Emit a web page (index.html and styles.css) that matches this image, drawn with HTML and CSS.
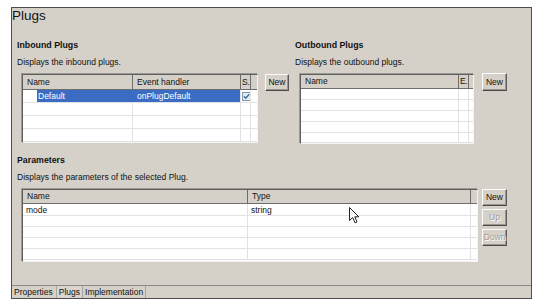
FILE: index.html
```html
<!DOCTYPE html>
<html lang="en">
<head>
<meta charset="utf-8">
<title>Plugs</title>
<link rel="stylesheet" href="styles.css">
</head>
<body>
<div class="frame">
  <div class="title">Plugs</div>
  <div class="body">
    <div class="plugs">
      <section class="sec">
        <div class="sec-title">Inbound Plugs</div>
        <div class="sec-desc">Displays the inbound plugs.</div>
        <div class="tbl-wrap gap-in">
          <div class="tbl tbl-in">
            <div class="tr th"><div class="c">Name</div><div class="c">Event handler</div><div class="c c-narrow">S.</div><div class="c"></div></div>
            <div class="tr sel">
              <div class="c c-sel-name"><span class="hl">Default</span></div>
              <div class="c c-sel">onPlugDefault</div>
              <div class="c c-chk"><span class="chk"><svg width="7" height="7" viewBox="0 0 7 7"><path d="M1 3.2 L2.8 5.2 L6.2 1.2" fill="none" stroke="#4a6a96" stroke-width="1.4"/></svg></span></div>
              <div class="c"></div>
            </div>
            <div class="tr"><div class="c"></div><div class="c"></div><div class="c"></div><div class="c"></div></div>
            <div class="tr"><div class="c"></div><div class="c"></div><div class="c"></div><div class="c"></div></div>
            <div class="tr"><div class="c"></div><div class="c"></div><div class="c"></div><div class="c"></div></div>
          </div>
          <div class="btn btn-in">New</div>
        </div>
      </section>
      <section class="sec">
        <div class="sec-title">Outbound Plugs</div>
        <div class="sec-desc">Displays the outbound plugs.</div>
        <div class="tbl-wrap gap-out">
          <div class="tbl tbl-out">
            <div class="tr th"><div class="c">Name</div><div class="c c-narrow">E.</div><div class="c"></div></div>
            <div class="tr"><div class="c"></div><div class="c"></div><div class="c"></div></div>
            <div class="tr"><div class="c"></div><div class="c"></div><div class="c"></div></div>
            <div class="tr"><div class="c"></div><div class="c"></div><div class="c"></div></div>
            <div class="tr"><div class="c"></div><div class="c"></div><div class="c"></div></div>
            <div class="tr"><div class="c"></div><div class="c"></div><div class="c"></div></div>
          </div>
          <div class="btn btn-out">New</div>
        </div>
      </section>
    </div>
    <section class="sec params">
      <div class="sec-title">Parameters</div>
      <div class="sec-desc">Displays the parameters of the selected Plug.</div>
      <div class="tbl-wrap gap-par">
        <div class="tbl tbl-par">
          <div class="tr th"><div class="c">Name</div><div class="c">Type</div><div class="c"></div></div>
          <div class="tr"><div class="c">mode</div><div class="c">string</div><div class="c"></div></div>
          <div class="tr"><div class="c"></div><div class="c"></div><div class="c"></div></div>
          <div class="tr"><div class="c"></div><div class="c"></div><div class="c"></div></div>
          <div class="tr"><div class="c"></div><div class="c"></div><div class="c"></div></div>
          <div class="tr"><div class="c"></div><div class="c"></div><div class="c"></div></div>
        </div>
        <div class="btn-stack">
          <div class="btn btn-par">New</div>
          <div class="btn btn-par disabled">Up</div>
          <div class="btn btn-par disabled">Down</div>
        </div>
      </div>
    </section>
  </div>
  <div class="tabs">
    <div class="tab tab-first">Properties</div>
    <div class="tab active">Plugs</div>
    <div class="tab">Implementation</div>
  </div>
  <svg class="cursor" width="11" height="17" viewBox="0 0 11 17"><path d="M0.5 0.5 L0.5 13.5 L3.7 10.5 L6 15.8 L8 14.9 L5.8 9.8 L9.8 9.8 Z" fill="#fff" stroke="#222" stroke-width="1" stroke-linejoin="miter"/></svg>
</div>
</body>
</html>
```

FILE: styles.css
```css
* { box-sizing: border-box; }
html, body { margin: 0; padding: 0; background: #fff; }
body {
  font-family: "Liberation Sans", Arial, sans-serif;
  font-size: 8.5px;
  line-height: 11px;
  color: #111;
}
.frame {
  position: relative;
  margin: 7px 0 0 11px;
  width: 521px;
  height: 292px;
  background: #d5d1c9;
  border: 1px solid #4e4e4e;
  display: flex;
  flex-direction: column;
}
.title {
  font-size: 13.5px;
  line-height: 15px;
  height: 15px;
  color: #111;
}
.body {
  flex: 1;
  padding-left: 5px;
}
.plugs {
  display: grid;
  grid-template-columns: 278px auto;
  margin-top: 17px;
}
.sec-title {
  font-weight: bold;
  font-size: 8.8px;
  line-height: 11px;
}
.sec-desc { margin-top: 6px; }
.tbl-wrap {
  display: flex;
  align-items: flex-start;
  margin-top: 6px;
  margin-left: 5px;
}
.gap-in { gap: 7px; }
.gap-out { gap: 8px; }
.gap-par { gap: 4px; }
.params { margin-top: 11px; }

.tbl {
  background: #fff;
  border-top: 1px solid #5e5e5e;
  border-left: 1px solid #5e5e5e;
  border-right: 1px solid #f4f4f4;
  border-bottom: 1px solid #f4f4f4;
  box-shadow: -1px -1px 0 #9c9a94;
}
.tbl-in { width: 236px; }
.tbl-out { width: 174px; }
.tbl-par { width: 456px; padding-bottom: 1px; }

.tr {
  display: grid;
  border-bottom: 1px solid #e2e2e2;
}
.tbl-in .tr { grid-template-columns: 110px 108px 10px 6px; height: 13px; line-height: 12px; }
.tbl-out .tr { grid-template-columns: 158px 10px 4px; height: 11px; line-height: 10px; }
.tbl-out .tr:last-child { height: 10px; }
.tbl-par .tr { grid-template-columns: 225px 223px 6px; height: 11px; line-height: 11px; }
.tbl-par .tr:nth-child(2) { height: 12px; line-height: 12px; }

.c {
  border-right: 1px solid #e2e2e2;
  padding-left: 3px;
  white-space: nowrap;
  overflow: hidden;
}
.c:last-child { border-right: none; }

.tr.th {
  background: #d5d1c9;
  border-bottom: 1px solid #6e6e6e;
}
.tbl-in .tr.th { height: 15px; line-height: 14px; }
.tbl-out .tr.th { height: 14px; line-height: 13px; }
.tbl-par .tr.th { height: 14px; line-height: 13px; }
.th .c {
  border-right: 1px solid #6e6e6e;
  padding-left: 4px;
}
.th .c:last-child { border-right: none; }
.th .c.c-narrow {
  padding-left: 1px;
  overflow: visible;
  letter-spacing: -0.3px;
}

.sel .c-sel-name {
  padding-left: 14px;
  border-right: none;
}
.hl {
  display: block;
  background: #3a6cc4;
  color: #fff;
  padding-left: 1px;
  height: 12px;
}
.sel .c-sel {
  background: #3a6cc4;
  color: #fff;
  padding-left: 4px;
}
.c-chk { padding-left: 0; }
.chk {
  display: flex;
  align-items: center;
  justify-content: center;
  width: 9px;
  height: 9px;
  margin: 2px 0 0 1px;
  border: 1px solid #7d95b4;
  background: #e6ebf2;
}

.btn {
  background: #d5d1c9;
  border: 1px solid;
  border-color: #fbfbfb #5a5a5a #4a4a4a #fbfbfb;
  box-shadow: inset -1px -1px 0 #9a978f;
  text-align: center;
  color: #111;
}
.btn-in { width: 24px; height: 17px; line-height: 15px; }
.btn-out { width: 25px; height: 18px; line-height: 16px; margin-top: -1px; }
.btn-stack { display: flex; flex-direction: column; gap: 3px; }
.btn-par { width: 25px; height: 17px; line-height: 15px; }
.btn.disabled {
  color: #a3a097;
  text-shadow: 1px 1px 0 #fff;
}

.tabs {
  display: flex;
  height: 13px;
  border-top: 1px solid #8c8a84;
}
.tab {
  padding: 1px 2px 0;
  line-height: 11px;
  border-right: 1px solid #a9a6a0;
}
.tab-first { padding: 1px 3px 0 2px; }
.tab.active { background: #dad6cf; }

.cursor {
  position: absolute;
  left: 337px;
  top: 199px;
}
```
